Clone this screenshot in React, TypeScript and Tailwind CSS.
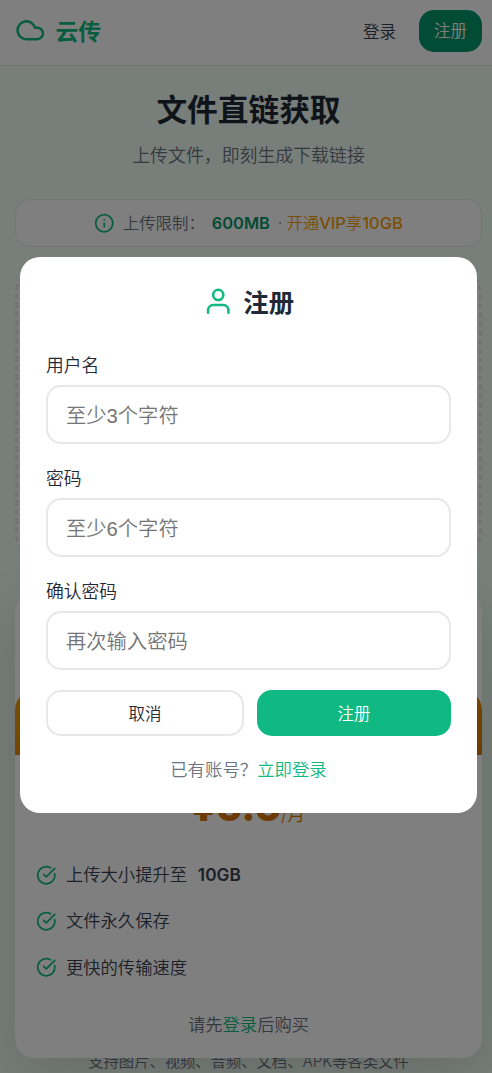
import { useState } from "react"
import { CircleCheckBig, Cloud, Info } from "lucide-react"
import type { ReactNode } from "react"

type FieldProps = {
  label: string
  placeholder: string
  type?: string
}

const Field = ({ label, placeholder, type = "text" }: FieldProps) => {
  const [value, setValue] = useState("")

  return (
    <label className="block h-[113px]">
      <span className="block h-[34px] text-[17.8px] leading-[29px] text-[#1f2937]">{label}</span>
      <input
        type={type}
        value={value}
        placeholder={placeholder}
        onChange={(e) => setValue(e.target.value)}
        className="block h-[59px] w-full rounded-[15px] border-2 border-[#e5e7eb] px-[18px] pt-[3px] font-['Liberation_Sans','Noto_Sans_CJK_SC',sans-serif] text-[20.3px] font-[350] text-gray-800 outline-none placeholder:text-[#757575]"
      />
    </label>
  )
}

const Feature = ({ children }: { children: ReactNode }) => (
  <li className="flex h-[46.3px] items-center gap-[10px]">
    <CircleCheckBig className="size-[20.5px] shrink-0 text-[#10b981]" />
    <span>{children}</span>
  </li>
)

const UserIcon = () => (
  <svg
    viewBox="0 0 24 24"
    fill="none"
    stroke="currentColor"
    strokeWidth="2"
    strokeLinecap="round"
    strokeLinejoin="round"
    className="mb-px size-[30.5px] text-[#10b981]"
  >
    <path d="M20 21v-2a4 4 0 0 0-4-4H8a4 4 0 0 0-4 4v2" />
    <circle cx="12" cy="7" r="4" />
  </svg>
)

const Header = () => (
  <header className="flex h-[66px] items-center justify-between border-b border-[#e5e7eb] bg-white pb-[4px] pr-[10px] pl-[15px]">
    <div className="flex items-center gap-[10px] text-[22.8px] font-bold text-[#10b981]">
      <Cloud className="size-[30.5px]" />
      <span className="pt-[3px]">云传</span>
    </div>
    <nav className="flex items-center gap-[23px] text-[16.5px] font-[350]">
      <a className="pt-[3px] text-[#374151]">登录</a>
      <button className="h-[42px] w-[63px] rounded-[15px] bg-[#059669] pt-[2px] text-white">注册</button>
    </nav>
  </header>
)

const PlanCard = () => (
  <section className="relative z-10 mt-[37px] h-[466px] rounded-[20px] bg-white shadow-[0_20px_60px_rgba(0,0,0,0.15)]">
    <div className="h-[98px]" />
    <div className="h-[65px] rounded-t-[20px] bg-linear-to-br from-[#f59e0b] to-[#d97706]" />
    <div className="flex h-[97px] items-end justify-center pb-[21px] leading-none text-[#d97706]">
      <span className="text-[40.6px] leading-[48px] font-extrabold">¥6.6</span>
      <span className="text-[17.8px] leading-[32px]">/月</span>
    </div>
    <ul className="px-[20.5px] text-[17.3px] text-[#374151]">
      <Feature>
        上传大小提升至 <strong className="ml-[6px] font-semibold">10GB</strong>
      </Feature>
      <Feature>文件永久保存</Feature>
      <Feature>更快的传输速度</Feature>
    </ul>
    <p className="mt-[21px] text-center text-[17.3px] leading-[26px] text-[#6b7280]">
      请先<a className="text-[#10b981]">登录</a>后购买
    </p>
  </section>
)

const RegisterModal = () => (
  <div className="fixed inset-0 z-20 bg-black/50 pt-[257px] pr-[15px] pl-[20px]">
    <div className="h-[556px] rounded-[20px] bg-white px-[26px] pt-[26px] font-[350]">
      <h2 className="mb-[30px] flex h-[38px] items-center justify-center gap-[10px] text-[25.4px] font-bold text-[#1f2937]">
        <UserIcon />
        <span className="pt-[2px]">注册</span>
      </h2>
      <form onSubmit={(e) => e.preventDefault()}>
        <Field label="用户名" placeholder="至少3个字符" />
        <Field label="密码" placeholder="至少6个字符" type="password" />
        <Field label="确认密码" placeholder="再次输入密码" type="password" />
        <div className="flex gap-[13px] text-[16.5px]">
          <button type="button" className="h-[46px] w-[198px] rounded-[15px] border-2 border-[#e5e7eb] pt-[3px] text-[#1f2937]">
            取消
          </button>
          <button type="submit" className="h-[46px] flex-1 rounded-[15px] bg-[#10b981] pt-[3px] text-white">
            注册
          </button>
        </div>
      </form>
      <p className="mt-[19px] text-center text-[17.4px] leading-[29px] text-[#6b7280]">
        已有账号？<a className="text-[#10b981]">立即登录</a>
      </p>
    </div>
  </div>
)

export default function App() {
  return (
    <div className="h-[1073px] overflow-hidden bg-[#f0fdf4] font-['Inter','Noto_Sans_CJK_SC',sans-serif] font-[350]">
      <Header />
      <main className="pr-[10px] pl-[15px]">
        <h1 className="mt-[21px] text-center text-[30.7px] leading-[46px] font-bold text-[#1f2937]">文件直链获取</h1>
        <p className="mt-[9px] text-center text-[17.9px] leading-[28px] text-[#6b7280]">上传文件，即刻生成下载链接</p>
        <div className="mt-[29px] flex h-[48px] items-center justify-center rounded-[15px] border border-[#e5e7eb] bg-white text-[16.4px] text-[#6b7280]">
          <Info className="mr-[8px] size-[20.5px] text-[#10b981]" />
          <span>上传限制：</span>
          <strong className="ml-[7px] font-semibold text-[#059669]">600MB</strong>
          <span className="mr-[4px] ml-[8px]">·</span>
          <a className="font-medium text-[#f59e0b]">
            <span className="font-[350]">开通</span>VIP<span className="font-[350]">享</span>10GB
          </a>
        </div>
        {/* Drop zone */}
        <div className="mt-[25px] h-[283px] rounded-[20px] border-[3px] border-dashed border-[#e5e7eb] bg-white" />
        <PlanCard />
        <footer className="-mt-[9px] text-center text-[15.3px] leading-[26px] text-[#6b7280]">
          支持图片、视频、音频、文档、APK等各类文件
        </footer>
      </main>
      <RegisterModal />
    </div>
  )
}
